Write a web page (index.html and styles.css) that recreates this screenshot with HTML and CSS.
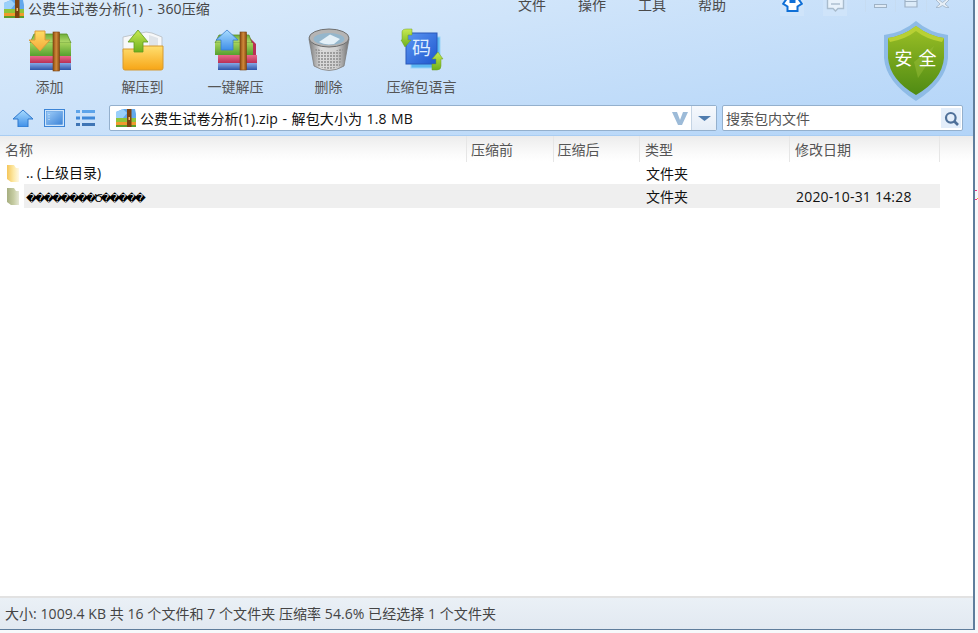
FILE: index.html
```html
<!DOCTYPE html>
<html lang="zh-CN">
<head>
<meta charset="utf-8">
<title>公费生试卷分析(1) - 360压缩</title>
<link rel="stylesheet" href="styles.css">
</head>
<body>
<svg class="defs" aria-hidden="true">
  <defs>
    <linearGradient id="gGreen" x1="0" y1="0" x2="0" y2="1"><stop offset="0" stop-color="#a5d25a"/><stop offset="1" stop-color="#55a02f"/></linearGradient>
    <linearGradient id="gGreenTop" x1="0" y1="0" x2="0" y2="1"><stop offset="0" stop-color="#6fae3a"/><stop offset="1" stop-color="#b4dc6c"/></linearGradient>
    <linearGradient id="gPink" x1="0" y1="0" x2="0" y2="1"><stop offset="0" stop-color="#e86a8a"/><stop offset="1" stop-color="#b92f55"/></linearGradient>
    <linearGradient id="gBlueBook" x1="0" y1="0" x2="0" y2="1"><stop offset="0" stop-color="#87a9e6"/><stop offset="1" stop-color="#2f55a8"/></linearGradient>
    <linearGradient id="gStrap" x1="0" y1="0" x2="1" y2="0"><stop offset="0" stop-color="#8b4a12"/><stop offset=".5" stop-color="#d08a3a"/><stop offset="1" stop-color="#8b4a12"/></linearGradient>
    <linearGradient id="gOrange" x1="0" y1="0" x2="0" y2="1"><stop offset="0" stop-color="#ffdc62"/><stop offset="1" stop-color="#f4a93a"/></linearGradient>
    <linearGradient id="gFolder" x1="0" y1="0" x2="0" y2="1"><stop offset="0" stop-color="#ffdf70"/><stop offset="1" stop-color="#f7a516"/></linearGradient>
    <linearGradient id="gLeaf" x1="0" y1="0" x2="0" y2="1"><stop offset="0" stop-color="#c9ea52"/><stop offset="1" stop-color="#6db01c"/></linearGradient>
    <linearGradient id="gSky" x1="0" y1="0" x2="0" y2="1"><stop offset="0" stop-color="#a8dcff"/><stop offset="1" stop-color="#3f8fe8"/></linearGradient>
    <linearGradient id="gBin" x1="0" y1="0" x2="1" y2="0"><stop offset="0" stop-color="#7a7a7a"/><stop offset=".3" stop-color="#dcdcdc"/><stop offset=".7" stop-color="#d0d0d0"/><stop offset="1" stop-color="#707070"/></linearGradient>
    <linearGradient id="gCode" x1="0" y1="0" x2="1" y2="1"><stop offset="0" stop-color="#5b95f2"/><stop offset="1" stop-color="#1f58cf"/></linearGradient>
    <linearGradient id="gShield" x1="0" y1="0" x2="0" y2="1"><stop offset="0" stop-color="#9cc026"/><stop offset=".5" stop-color="#74a41c"/><stop offset="1" stop-color="#4f8b14"/></linearGradient>
    <linearGradient id="gView" x1="0" y1="0" x2="1" y2="1"><stop offset="0" stop-color="#9fcdf8"/><stop offset="1" stop-color="#3d84d8"/></linearGradient>
    <linearGradient id="gFolderPale" x1="0" y1="0" x2="1" y2="0"><stop offset="0" stop-color="#f5c65a"/><stop offset=".55" stop-color="#fde9a6"/><stop offset="1" stop-color="#fff9e6"/></linearGradient>
    <linearGradient id="gFolderOlive" x1="0" y1="0" x2="1" y2="0"><stop offset="0" stop-color="#a6ae80"/><stop offset=".55" stop-color="#c6cca2"/><stop offset="1" stop-color="#e6e8d6"/></linearGradient>
    <pattern id="pMesh" width="3" height="3" patternUnits="userSpaceOnUse"><rect width="2" height="2" fill="#8f8f8f"/></pattern>
    <g id="zip">
      <path d="M0 3 L7 0 H19 L20 5 V9 H0Z" fill="#62a8ec"/>
      <path d="M7 0 L11 4 L7 9 H0 V3Z" fill="#9ad0fa"/>
      <rect x="0" y="9" width="20" height="4" fill="#8fc53a"/>
      <rect x="0" y="13" width="20" height="3" fill="#f09a2c"/>
      <rect x="0" y="16" width="20" height="2" fill="#5d9e2a"/>
      <rect x="11" y="0" width="4.5" height="18" fill="#7c4311"/>
      <rect x="12.5" y="8" width="1.5" height="3" fill="#f0c070"/>
    </g>
  </defs>
</svg>
<main class="window">
  <header class="chrome">
    <div class="titlebar">
      <div class="title">
        <svg class="title-icon" width="20" height="18" viewBox="0 2 20 18"><use href="#zip" y="2"/></svg>
        <span class="title-text">公费生试卷分析(1) - 360压缩</span>
      </div>
      <nav class="menu">
        <span class="menu-item">文件</span>
        <span class="menu-item">操作</span>
        <span class="menu-item">工具</span>
        <span class="menu-item">帮助</span>
      </nav>
      <div class="winbtns">
        <span class="skin-btn">
          <svg width="21" height="16" viewBox="0 0 21 16"><path d="M4.5 -1 L1.2 3.8 L5.5 6.5 V11 H15.5 V6.5 L19.8 3.8 L16.5 -1" fill="#fff" stroke="#0f6fd6" stroke-width="2"/><path d="M7.5 0 H13.5 V3 H7.5Z" fill="#0f6fd6"/></svg>
        </span>
        <span class="skin-btn msg-btn">
          <svg width="21" height="16" viewBox="0 0 21 16"><path d="M2.5 -1 V8.5 H8 L10.5 11 L13 8.5 H18.5 V-1" fill="#e8f2fb" stroke="#a9bccd" stroke-width="1.4"/><path d="M6 4 H15" stroke="#a9bccd" stroke-width="1.4"/></svg>
        </span>
        <span class="ctl ctl-first"><svg width="13" height="5" viewBox="0 0 13 5"><rect x=".5" y=".5" width="12" height="3" fill="#dfeaf5" stroke="#9fb2c5"/></svg></span>
        <span class="ctl"><svg width="14" height="8" viewBox="0 0 14 8"><path d="M1 -1 V7 H13 V-1 M1 1.5 H13" fill="#dcebf8" stroke="#9fb2c5" stroke-width="1.2"/></svg></span>
        <span class="ctl ctl-close"><svg width="15" height="8" viewBox="0 0 15 8"><path d="M3 -1 L7.5 2.5 L12 -1 L14 0 L10 4 L14 7.5 H11 L7.5 5.5 L4 7.5 H1 L5 4 L1 0Z" fill="#e6eef6" stroke="#9fb2c5" stroke-width=".8"/></svg></span>
      </div>
    </div>

    <div class="toolbar">
      <div class="tool">
        <svg class="tool-icon" width="46" height="44" viewBox="0 0 46 44">
          <path d="M7 6 H40 L44 15 H3Z" fill="url(#gGreenTop)" stroke="#5c8f2a" stroke-width=".8"/>
          <rect x="3" y="15" width="41" height="13" fill="url(#gGreen)"/>
          <rect x="3" y="28" width="41" height="7" fill="url(#gPink)"/>
          <rect x="3" y="35" width="41" height="7" fill="url(#gBlueBook)"/>
          <rect x="26" y="4" width="6.5" height="39" fill="url(#gStrap)" stroke="#7c4311" stroke-width=".6"/>
          <path d="M8 3 H18 V12 H23 L13 23 L2 12 H8Z" fill="url(#gOrange)" stroke="#dc9a3a"/>
        </svg>
        <span class="tool-label">添加</span>
      </div>
      <div class="tool">
        <svg class="tool-icon" width="46" height="44" viewBox="0 0 46 44">
          <path d="M3 9 L26 4 L32 5 L42 9 V24 H3Z" fill="#f7f8f9" stroke="#bfc6cc"/>
          <path d="M29 7 L38 10 V22 H29Z" fill="#dfe4e9"/>
          <path d="M3 21 H19 L22 18 H43 V40 Q43 42 41 42 H5 Q3 42 3 40Z" fill="url(#gFolder)" stroke="#d59a30"/>
          <path d="M8 14 L18 2 L28 14 H23 V24 H14 V14Z" fill="url(#gLeaf)" stroke="#5f9a1e" stroke-width=".8"/>
        </svg>
        <span class="tool-label">解压到</span>
      </div>
      <div class="tool">
        <svg class="tool-icon" width="46" height="44" viewBox="0 0 46 44">
          <path d="M33 6 L43 16 V28 H36Z" fill="#b92f55"/>
          <path d="M6 7 H36 L39 15 H2Z" fill="url(#gGreenTop)" stroke="#5c8f2a" stroke-width=".8"/>
          <rect x="2" y="15" width="38" height="12" fill="url(#gGreen)"/>
          <rect x="5" y="27" width="39" height="8" fill="url(#gPink)"/>
          <rect x="5" y="35" width="39" height="7" fill="url(#gBlueBook)"/>
          <rect x="27" y="4" width="6.5" height="38" fill="url(#gStrap)" stroke="#7c4311" stroke-width=".6"/>
          <path d="M3 12 L14 2 L25 12 H20 V22 H8 V12Z" fill="url(#gSky)" stroke="#3b7fcf" stroke-width=".8"/>
        </svg>
        <span class="tool-label">一键解压</span>
      </div>
      <div class="tool">
        <svg class="tool-icon" width="46" height="44" viewBox="0 0 46 44">
          <path d="M3 11 L8 38 Q23 47 38 38 L43 11Z" fill="url(#gBin)" stroke="#7d7d7d" stroke-width=".8"/>
          <path d="M9 20 Q23 27 37 20 L34 38 Q23 44 12 38Z" fill="url(#pMesh)" opacity=".8"/>
          <ellipse cx="23" cy="10" rx="20" ry="9" fill="#b4b4b4" stroke="#6f6f6f"/>
          <ellipse cx="23" cy="11" rx="15.5" ry="6" fill="#94b6cc"/>
          <path d="M13 14 L24 6.5 L34 11 L28 16 Q19 17.5 13 14Z" fill="#e4f0f8"/>
        </svg>
        <span class="tool-label">删除</span>
      </div>
      <div class="tool">
        <svg class="tool-icon" width="46" height="44" viewBox="0 0 46 44">
          <rect x="12" y="9" width="29" height="31" fill="#5cb8f2" stroke="#9ad4f8"/>
          <rect x="7" y="5" width="31" height="31" fill="url(#gCode)" stroke="#2a58b8"/>
          <text class="code-glyph" x="22.5" y="27" text-anchor="middle">码</text>
          <path d="M3 4 Q3 1 8 1 H13 V7 H9 V12 L12 12 L6 19 L2 12 H3Z" fill="url(#gLeaf)" stroke="#6c9e22" stroke-width=".5"/>
          <path d="M42 38 Q42 42 38 42 H33 V36 H37 V31 L33 31 L39 24 L44 31 H42Z" fill="url(#gLeaf)" stroke="#6c9e22" stroke-width=".5"/>
        </svg>
        <span class="tool-label">压缩包语言</span>
      </div>
    </div>

    <svg class="shield" width="68" height="82" viewBox="0 0 68 82">
      <path d="M34 1 Q48 13 66 15 V38 Q64 62 34 81 Q4 62 2 38 V15 Q20 13 34 1Z" fill="#8ebbe6"/>
      <path d="M34 6 Q47 16 62 18 V38 Q60 60 34 75 Q8 60 6 38 V18 Q21 16 34 6Z" fill="url(#gShield)"/>
      <path d="M34 6 Q47 16 62 18 L60 22 Q44 19 34 11 Q24 19 8 22 L6 18 Q21 16 34 6Z" fill="#b8d034"/>
      <path d="M36 58 L32 42 L52 26 L44 46Z" fill="#9cc23c" opacity=".45"/>
      <text class="shield-text" x="34" y="45" text-anchor="middle">安 全</text>
    </svg>

    <div class="navrow">
      <div class="navbtns">
        <svg class="nav-up" width="22" height="18" viewBox="0 0 22 18"><path d="M11 1 L21 10 H16 V18 H6 V10 H1Z" fill="url(#gSky)" stroke="#2f78cc"/></svg>
        <svg class="nav-view" width="21" height="18" viewBox="0 0 21 18"><rect x=".5" y=".5" width="20" height="17" fill="#cfe5fb" stroke="#3b84d6"/><rect x="2.5" y="2.5" width="16" height="13" fill="url(#gView)" stroke="#4b90dc" stroke-width=".5"/><path d="M5 5 V12" stroke="#d8edff" stroke-dasharray="1 1.5"/></svg>
        <svg class="nav-list" width="19" height="18" viewBox="0 0 19 18"><path d="M0 1 H4 V4 H0Z M6 1 H19 V4 H6Z" fill="#5da4ea"/><path d="M0 7.5 H4 V10.5 H0Z M6 7.5 H19 V10.5 H6Z" fill="#3f88d8"/><path d="M0 14 H4 V17 H0Z M6 14 H19 V17 H6Z" fill="#3f75b5"/></svg>
      </div>
      <div class="address">
        <svg class="addr-icon" width="20" height="18" viewBox="0 0 20 18"><use href="#zip"/></svg>
        <span class="addr-text">公费生试卷分析(1).zip - 解包大小为 1.8 MB</span>
        <svg class="addr-v" width="16" height="13" viewBox="0 0 16 13"><path d="M0 0 H5 L8 8 L11 0 H16 L10 13 H6Z" fill="#9dbbd8"/></svg>
        <span class="addr-drop"><svg width="13" height="5" viewBox="0 0 13 5"><path d="M0 0 H13 L6.5 5Z" fill="#4f7cae"/></svg></span>
      </div>
      <div class="search">
        <span class="search-text">搜索包内文件</span>
        <span class="search-btn"><svg width="15" height="15" viewBox="0 0 15 15"><circle cx="6.8" cy="6.8" r="4.8" fill="none" stroke="#4f7099" stroke-width="2.2"/><path d="M10 10 L14 14" stroke="#4f7099" stroke-width="2.6"/></svg></span>
      </div>
    </div>
  </header>

  <section class="list">
    <div class="list-head">
      <span class="col col-name head-cell">名称</span>
      <span class="col col-num head-cell">压缩前</span>
      <span class="col col-num head-cell">压缩后</span>
      <span class="col col-type head-cell">类型</span>
      <span class="col col-date head-cell">修改日期</span>
    </div>
    <div class="row row-parent">
      <span class="col col-name">
        <svg class="folder" width="13" height="17" viewBox="0 0 13 17"><path d="M0 0 H7 L9 3 H12 V17 H4 L0 14Z" fill="url(#gFolderPale)"/></svg>
        <span class="row-name">.. (上级目录)</span>
      </span>
      <span class="col col-num"></span>
      <span class="col col-num"></span>
      <span class="col col-type cell-type">文件夹</span>
      <span class="col col-date"></span>
    </div>
    <div class="row row-selected">
      <span class="col col-name">
        <svg class="folder" width="13" height="17" viewBox="0 0 13 17"><path d="M0 0 H7 L9 3 H12 V17 H4 L0 14Z" fill="url(#gFolderOlive)"/></svg>
        <span class="row-name garbled">��������Ծ�����</span>
      </span>
      <span class="col col-num"></span>
      <span class="col col-num"></span>
      <span class="col col-type cell-type">文件夹</span>
      <span class="col col-date cell-date">2020-10-31 14:28</span>
    </div>
  </section>

  <footer class="status">大小: 1009.4 KB 共 16 个文件和 7 个文件夹 压缩率 54.6% 已经选择 1 个文件夹</footer>
</main>
<svg class="edge-marks" width="4" height="12" viewBox="0 0 4 12"><rect x="0" y="0" width="2" height="1" fill="#f0308a"/><rect x="2" y="8" width="2" height="1" fill="#f0a030"/><rect x="0" y="9" width="2" height="1" fill="#f0308a"/></svg>
</body>
</html>
```
FILE: styles.css
```css
* { box-sizing: border-box; }
html, body { margin: 0; height: 100%; overflow: hidden; }
body {
  background: #f7f9fb;
  font-family: "Open Sans", "Noto Sans CJK SC", sans-serif;
  font-size: 14px;
  color: #1a1a1a;
}
.defs { position: absolute; width: 0; height: 0; }
.edge-marks { position: absolute; left: 975px; top: 190px; }
svg { display: block; flex: none; }

.window {
  width: 975px;
  height: 630px;
  display: flex;
  flex-direction: column;
  background: #fff;
  border-right: 2px solid #5f7d9c;
  border-bottom: 1px solid #5f7d9c;
}

.chrome {
  position: relative;
  height: 136px;
  flex: none;
  background: linear-gradient(170deg, #dcecfb 0%, #cfe4fa 35%, #b2d4f8 100%);
  border-bottom: 1px solid #a9cdf2;
}

.titlebar { height: 18px; display: flex; overflow: hidden; }
.title { display: flex; width: 518px; padding-left: 4px; }
.title-icon { margin-right: 4px; }
.title-text { line-height: 17px; color: #444; white-space: nowrap; letter-spacing: .1px; word-spacing: 1px; }
.menu { display: flex; gap: 32px; margin-top: -4px; width: 262px; }
.menu-item { line-height: 18px; color: #4a4a4a; }
.winbtns { display: flex; height: 16px; }
.skin-btn {
  width: 24px;
  height: 16px;
  display: flex;
  justify-content: center;
  background: #cfe4fa;
}
.msg-btn { margin-left: 19px; }
.ctl {
  width: 31px;
  height: 12px;
  display: flex;
  justify-content: center;
  border-right: 1px solid #c6dcf2;
}
.ctl-first { margin-left: 18px; width: 31px; border-left: 1px solid #c6dcf2; padding-top: 4px; }
.ctl-close { border-right: 0; }

.toolbar { display: flex; padding: 10px 0 0 3px; height: 87px; }
.tool {
  width: 93px;
  display: flex;
  flex-direction: column;
  align-items: center;
}
.tool-icon { height: 44px; }
.tool-label { margin-top: 5px; line-height: 20px; color: #555; white-space: nowrap; }
.code-glyph { font-size: 19px; font-weight: 400; fill: #dfeeff; font-family: "Noto Sans CJK SC", sans-serif; }

.shield { position: absolute; left: 882px; top: 20px; }
.shield-text { font-size: 18px; font-weight: 400; fill: #fff; font-family: "Noto Sans CJK SC", sans-serif; letter-spacing: 1px; }

.navrow { display: flex; height: 26px; }
.navbtns { display: flex; width: 109px; padding: 4px 0 0 12px; }
.nav-view { margin-left: 10px; }
.nav-list { margin-left: 11px; }
.address {
  width: 608px;
  display: flex;
  align-items: center;
  background: #fff;
  border: 1px solid #94b0cd;
  border-radius: 2px;
  padding-left: 6px;
}
.addr-text { flex: 1; margin-left: 4px; padding-top: 1px; line-height: 24px; color: #111; white-space: nowrap; letter-spacing: .1px; word-spacing: .75px; }
.addr-v { margin-right: 3px; }
.addr-drop {
  width: 25px;
  height: 24px;
  display: flex;
  align-items: center;
  justify-content: center;
  background: linear-gradient(#f6f9fd, #e4edf7);
  border-left: 1px solid #c5d4e4;
}
.search {
  width: 241px;
  margin-left: 5px;
  display: flex;
  align-items: center;
  justify-content: space-between;
  background: #fff;
  border: 1px solid #94b0cd;
  border-radius: 2px;
  padding: 0 1px 0 3px;
}
.search-text { line-height: 24px; padding-top: 1px; color: #555; }
.search-btn {
  width: 20px;
  height: 20px;
  display: flex;
  align-items: center;
  justify-content: center;
  background: #e4eefa;
}

.list { flex: 1; }
.list-head {
  height: 26px;
  display: flex;
  background: linear-gradient(#ececec, #fbfbfb 70%, #fff);
}
.row { height: 24px; display: flex; align-items: center; }
.row-parent { height: 22px; }
.row-selected { width: 940px; background: linear-gradient(90deg, #fff 24px, #efefef 24px); }

.col { display: flex; align-items: center; height: 100%; white-space: nowrap; }
.col-name { width: 467px; }
.col-num { width: 86.5px; }
.col-type { width: 150px; }
.col-date { width: 150px; }
.head-cell {
  padding: 1px 0 0 5px;
  border-right: 1px solid #e6e6e6;
  color: #555;
  line-height: 25px;
}
.col-num.head-cell { padding-left: 4px; }
.folder { margin-left: 7px; }
.row-name { margin-left: 6px; line-height: 20px; color: #111; }
.garbled {
  font-family: "DejaVu Sans", sans-serif;
  font-size: 11px;
  font-weight: 400;
  color: #000;
  letter-spacing: -2.8px;
  margin-top: 6px;
}
.cell-type { padding-left: 6px; color: #111; }
.cell-date { padding-left: 6px; color: #111; letter-spacing: .2px; }

.status {
  height: 33px;
  flex: none;
  padding-left: 5px;
  background: linear-gradient(#eaf0f6, #e2e9f1);
  border-top: 2px solid #e2e2e2;
  line-height: 31px;
  color: #444;
  white-space: nowrap;
  letter-spacing: .06px;
}
```
